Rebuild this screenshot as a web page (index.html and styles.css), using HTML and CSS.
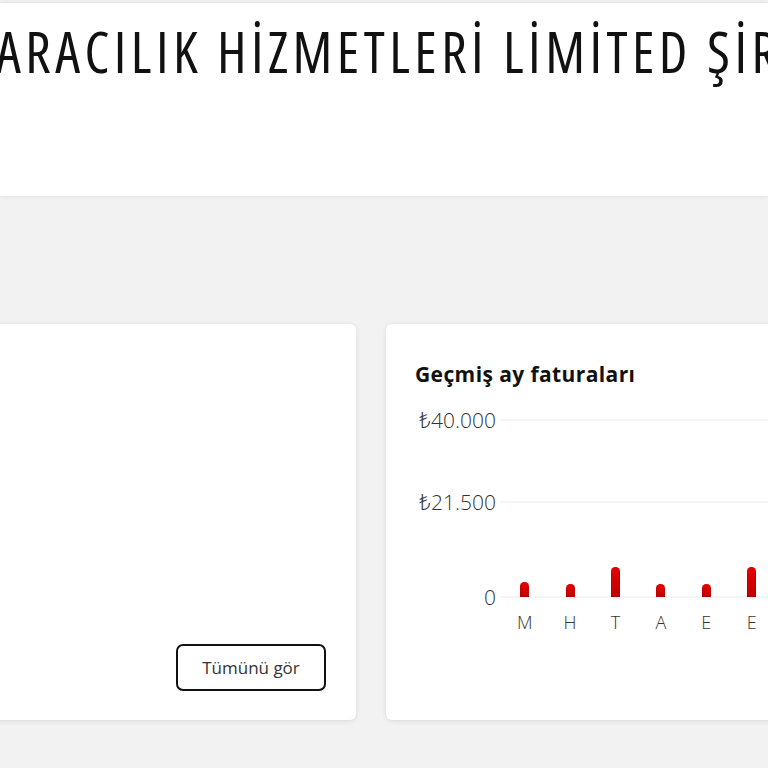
FILE: index.html
```html
<!DOCTYPE html>
<html lang="tr">
<head>
<meta charset="utf-8">
<title>Faturalar</title>
<link rel="stylesheet" href="styles.css">
</head>
<body>
<header class="header">
  <h1 class="company">ARACILIK HİZMETLERİ LİMİTED ŞİRKETİ</h1>
</header>
<main class="cards">
  <section class="card card-list">
    <div class="card-spacer"></div>
    <button class="btn-outline" type="button">Tümünü gör</button>
  </section>
  <section class="card card-chart">
    <h2 class="card-title">Geçmiş ay faturaları</h2>
    <div class="chart">
      <div class="y-axis">
        <span class="y-label" style="bottom:100%">₺40.000</span>
        <span class="y-label" style="bottom:53.75%">₺21.500</span>
        <span class="y-label" style="bottom:0%">0</span>
      </div>
      <div class="plot">
        <div class="grid-line" style="bottom:100%"></div>
        <div class="grid-line" style="bottom:53.75%"></div>
        <div class="grid-line" style="bottom:0%"></div>
        <div class="bars">
          <div class="slot"><div class="bar" style="height:15px"></div></div>
          <div class="slot"><div class="bar" style="height:13px"></div></div>
          <div class="slot"><div class="bar" style="height:30px"></div></div>
          <div class="slot"><div class="bar" style="height:13px"></div></div>
          <div class="slot"><div class="bar" style="height:13px"></div></div>
          <div class="slot"><div class="bar" style="height:30px"></div></div>
        </div>
      </div>
      <div class="months">
        <span class="month">M</span>
        <span class="month">H</span>
        <span class="month">T</span>
        <span class="month">A</span>
        <span class="month">E</span>
        <span class="month">E</span>
      </div>
    </div>
  </section>
</main>
</body>
</html>
```
FILE: styles.css
```css
html, body {
  margin: 0;
  padding: 0;
}
body {
  background: #f2f2f2;
  font-family: "Open Sans", "Noto Sans", "DejaVu Sans", sans-serif;
  color: #333;
  overflow: hidden;
  width: 768px;
  height: 768px;
}
.header {
  margin-top: 3px;
  height: 193px;
  background: #fff;
  box-shadow: 0 0 5px rgba(0, 0, 0, 0.09);
  overflow: hidden;
  padding-top: 20px;
  box-sizing: border-box;
}
.company {
  margin: 0 0 0 -4px;
  font-size: 56px;
  line-height: 56px;
  font-weight: 400;
  font-stretch: 75%;
  letter-spacing: 4.5px;
  word-spacing: 0;
  color: #111;
  white-space: nowrap;
}
.cards {
  display: grid;
  grid-template-columns: 386px 400px;
  column-gap: 30px;
  margin: 128px 0 0 -30px;
}
.card {
  background: #fff;
  border-radius: 6px;
  box-shadow: 0 1px 5px rgba(0, 0, 0, 0.1);
  height: 396px;
  box-sizing: border-box;
  overflow: hidden;
}
.card-list {
  display: flex;
  flex-direction: column;
  align-items: flex-end;
  padding: 0 30px 29px 0;
}
.card-spacer {
  flex: 1;
}
.btn-outline {
  width: 150px;
  height: 47px;
  border: 2px solid #111;
  border-radius: 7px;
  background: #fff;
  font-family: "Open Sans", sans-serif;
  font-size: 17px;
  color: #333;
  padding: 0;
}
.card-chart {
  padding: 36px 0 0 29px;
}
.card-title {
  margin: 0;
  font-size: 21px;
  line-height: 28px;
  font-weight: 700;
  letter-spacing: 0.4px;
  color: #111;
}
.chart {
  display: grid;
  grid-template-columns: 81px 1fr;
  column-gap: 4px;
  margin-top: 32px;
}
.y-axis {
  position: relative;
  height: 177px;
}
.y-label {
  position: absolute;
  right: 0;
  transform: translateY(50%);
  font-size: 21px;
  line-height: 24px;
  font-weight: 300;
  color: #333;
  white-space: nowrap;
}
.plot {
  position: relative;
  height: 177px;
}
.grid-line {
  position: absolute;
  left: 0;
  right: 0;
  height: 1px;
  background: #ececec;
  transform: translateY(50%);
}
.bars {
  position: absolute;
  left: 2px;
  right: 0;
  bottom: 0;
  top: 0;
  display: flex;
  align-items: flex-end;
}
.slot {
  width: 45.4px;
  flex: none;
  display: flex;
  justify-content: center;
}
.bar {
  width: 9px;
  border-radius: 5px 5px 0 0;
  background: linear-gradient(to bottom, #e80000, #bf0000);
  box-shadow: inset 0 0 0 0.5px rgba(120, 0, 0, 0.35);
}
.months {
  grid-column: 2;
  display: flex;
  margin: 15px 0 0 2px;
}
.month {
  width: 45.4px;
  flex: none;
  text-align: center;
  font-size: 18px;
  line-height: 20px;
  font-weight: 300;
  color: #333;
}
```
